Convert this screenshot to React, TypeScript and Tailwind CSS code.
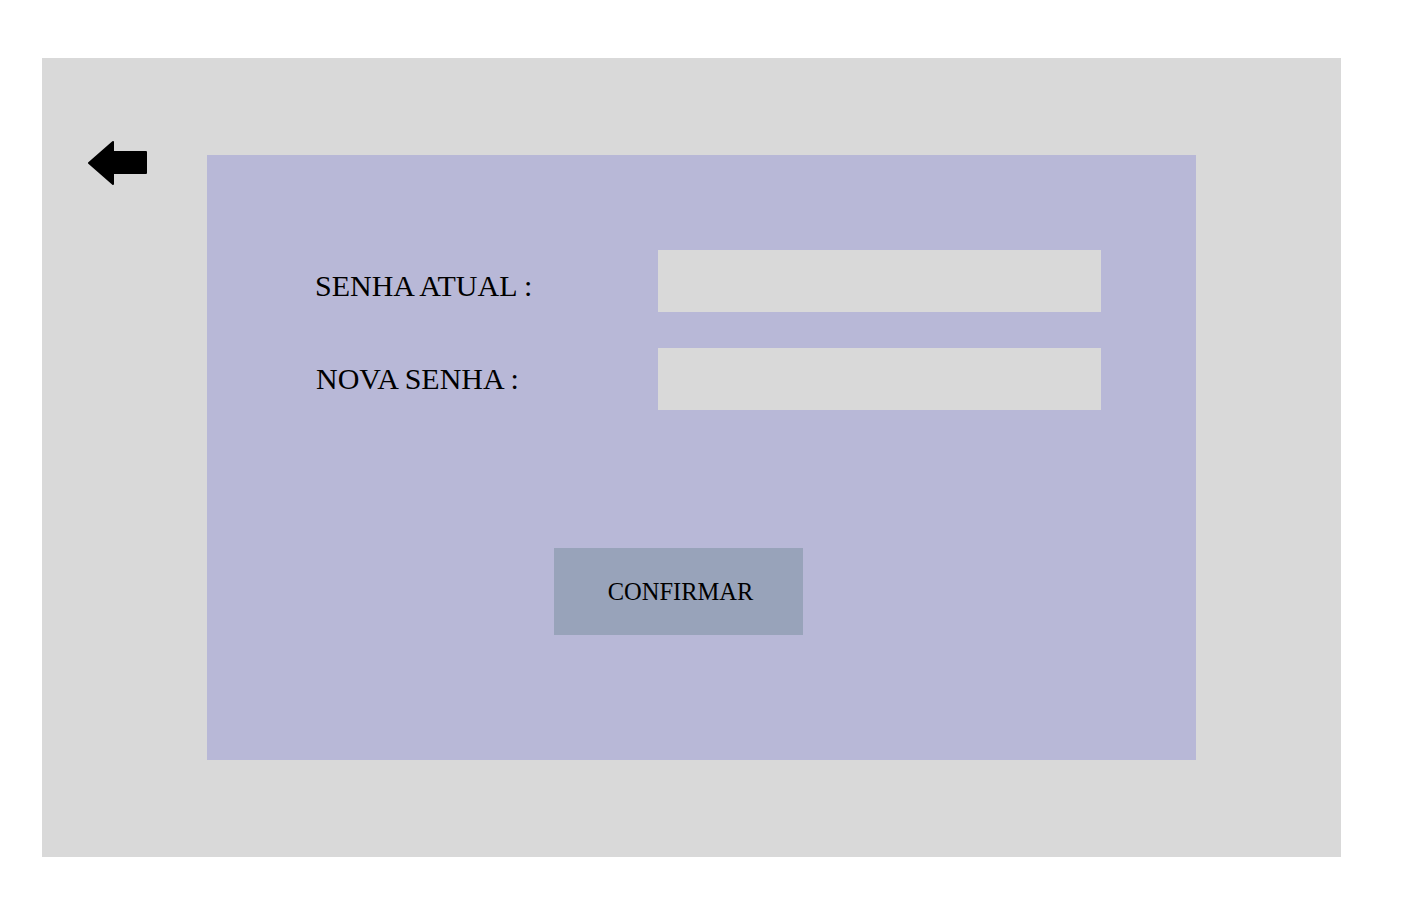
const BackArrow = () => (
  <svg width="59" height="47" viewBox="0 0 59 47" className="shrink-0">
    <path
      d="M1 23 L25 2 L25 12 L58 12 L58 33 L25 33 L25 44 Z"
      fill="black"
      stroke="black"
      strokeWidth="2"
      strokeLinejoin="round"
    />
  </svg>
);

const App = () => {
  return (
    <div className="min-h-screen bg-white pt-[58px] pl-[42px] font-['Liberation_Serif',serif] text-black">
      <div className="w-[1299px] h-[799px] bg-[#d9d9d9] flex items-start pl-[46px] pt-[82px]">
        <button aria-label="voltar">
          <BackArrow />
        </button>

        <section className="ml-[60px] mt-[15px] w-[989px] h-[605px] bg-[#b8b8d7] flex flex-col pl-[108px] pt-[95px]">
          <div className="grid grid-cols-[343px_443px] gap-y-[36px] items-center">
            <label className="text-[30px] leading-none mt-[10px]">SENHA ATUAL :</label>
            <input className="h-[62px] bg-[#d9d9d9] outline-none px-3" type="password" />

            <label className="text-[30px] leading-none pl-[1px]">NOVA SENHA :</label>
            <input className="h-[62px] bg-[#d9d9d9] outline-none px-3" type="password" />
          </div>

          <button className="ml-[239px] mt-[138px] w-[249px] h-[87px] bg-[#98a3ba] text-[24.5px] leading-none pl-[4px] pt-[2px]">
            CONFIRMAR
          </button>
        </section>
      </div>
    </div>
  );
};

export default App;
